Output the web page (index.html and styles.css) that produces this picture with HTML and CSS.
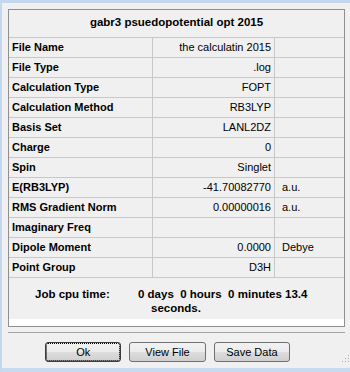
FILE: index.html
```html
<!DOCTYPE html>
<html lang="en">
<head>
    <meta charset="UTF-8">
    <title>gabr3 psuedopotential opt 2015</title>
    <link rel="stylesheet" href="styles.css">
</head>
<body>
<div class="janela">
    <div class="grade">
        <div class="titulo">gabr3 psuedopotential opt 2015</div>
        <div class="linha"><div class="rotulo">File Name</div><div class="valor">the calculatin 2015</div><div class="unidade"></div></div>
        <div class="linha"><div class="rotulo">File Type</div><div class="valor">.log</div><div class="unidade"></div></div>
        <div class="linha"><div class="rotulo">Calculation Type</div><div class="valor">FOPT</div><div class="unidade"></div></div>
        <div class="linha"><div class="rotulo">Calculation Method</div><div class="valor">RB3LYP</div><div class="unidade"></div></div>
        <div class="linha"><div class="rotulo">Basis Set</div><div class="valor">LANL2DZ</div><div class="unidade"></div></div>
        <div class="linha"><div class="rotulo">Charge</div><div class="valor">0</div><div class="unidade"></div></div>
        <div class="linha"><div class="rotulo">Spin</div><div class="valor">Singlet</div><div class="unidade"></div></div>
        <div class="linha"><div class="rotulo">E(RB3LYP)</div><div class="valor">-41.70082770</div><div class="unidade">a.u.</div></div>
        <div class="linha"><div class="rotulo">RMS Gradient Norm</div><div class="valor">0.00000016</div><div class="unidade">a.u.</div></div>
        <div class="linha"><div class="rotulo">Imaginary Freq</div><div class="valor"></div><div class="unidade"></div></div>
        <div class="linha"><div class="rotulo">Dipole Moment</div><div class="valor">0.0000</div><div class="unidade">Debye</div></div>
        <div class="linha"><div class="rotulo">Point Group</div><div class="valor">D3H</div><div class="unidade"></div></div>
        <div class="tempo">
            <div class="tempo-rotulo">Job cpu time:</div>
            <div class="tempo-valor">0 days&nbsp; 0 hours&nbsp; 0 minutes 13.4<br><span class="segundos">seconds.</span></div>
        </div>
        <div class="vazio"></div>
    </div>
    <div class="separador"></div>
    <div class="botoes">
        <button class="botao foco">Ok</button>
        <button class="botao">View File</button>
        <button class="botao">Save Data</button>
        <svg class="grip" width="8" height="8" viewBox="0 0 8 8">
            <rect x="6" y="0" width="1" height="1" fill="#a8a8a8"/>
            <rect x="3" y="3" width="1" height="1" fill="#a8a8a8"/>
            <rect x="6" y="3" width="1" height="1" fill="#a8a8a8"/>
            <rect x="0" y="6" width="1" height="1" fill="#a8a8a8"/>
            <rect x="3" y="6" width="1" height="1" fill="#a8a8a8"/>
            <rect x="6" y="6" width="1" height="1" fill="#a8a8a8"/>
        </svg>
    </div>
</div>
</body>
</html>
```

FILE: styles.css
```css
body {
    margin: 0;
    padding: 0;
    background-color: #f0f0f0;
    font-family: "Liberation Sans", Arial, sans-serif;
    font-size: 11px;
    color: #000;
}
.janela {
    width: 348px;
    height: 365px;
    border-top: 3px solid #c3d8ee;
    border-left: 2px solid #c3d8ee;
    border-bottom: 4px solid #c6dbf0;
    background-color: #f0f0f0;
    position: relative;
}
.grade {
    margin: 6px 0 0 6px;
    width: 335px;
    border: 1px solid #8e8f8f;
    background-color: #fff;
}
.titulo {
    height: 27px;
    line-height: 25px;
    text-align: center;
    font-weight: bold;
    font-size: 11.5px;
    background-color: #f0f0f0;
    border-bottom: 1px solid #c8c8c8;
}
.linha {
    display: flex;
    height: 19px;
    line-height: 19px;
    background-color: #f0f0f0;
    border-bottom: 1px solid #c8c8c8;
}
.rotulo {
    width: 140px;
    padding-left: 3px;
    border-right: 1px solid #c8c8c8;
    font-weight: bold;
    white-space: nowrap;
}
.valor {
    width: 118px;
    padding-right: 3px;
    text-align: right;
    border-right: 1px solid #c8c8c8;
    white-space: nowrap;
}
.unidade {
    flex: 1;
    padding-left: 7px;
}
.tempo {
    display: flex;
    height: 41px;
    padding-top: 0;
    background-color: #f0f0f0;
    font-weight: bold;
    font-size: 11.5px;
    line-height: 14px;
}
.tempo-rotulo {
    width: 103px;
    padding: 9px 0 0 26px;
}
.tempo-valor {
    padding-top: 9px;
    white-space: nowrap;
}
.segundos {
    margin-left: 13px;
}
.vazio {
    height: 7px;
    background-color: #fff;
}
.separador {
    margin: 5px 0 0 6px;
    width: 337px;
    height: 1px;
    background-color: #a0a0a0;
}
.botoes {
    display: flex;
    gap: 8px;
    margin: 9px 0 0 43px;
    align-items: flex-start;
}
.botao {
    width: 77px;
    height: 20px;
    padding: 0;
    font-family: "Liberation Sans", Arial, sans-serif;
    font-size: 11px;
    color: #000;
    border: 1px solid #707070;
    border-radius: 3px;
    background: linear-gradient(#f2f2f2 0%, #ebebeb 50%, #dddddd 51%, #cfcfcf 100%);
}
.foco {
    border-color: #3c3c3c;
    outline: 1px dotted #000;
    outline-offset: -2px;
}
.grip {
    margin: 13px 0 0 44px;
}
```
